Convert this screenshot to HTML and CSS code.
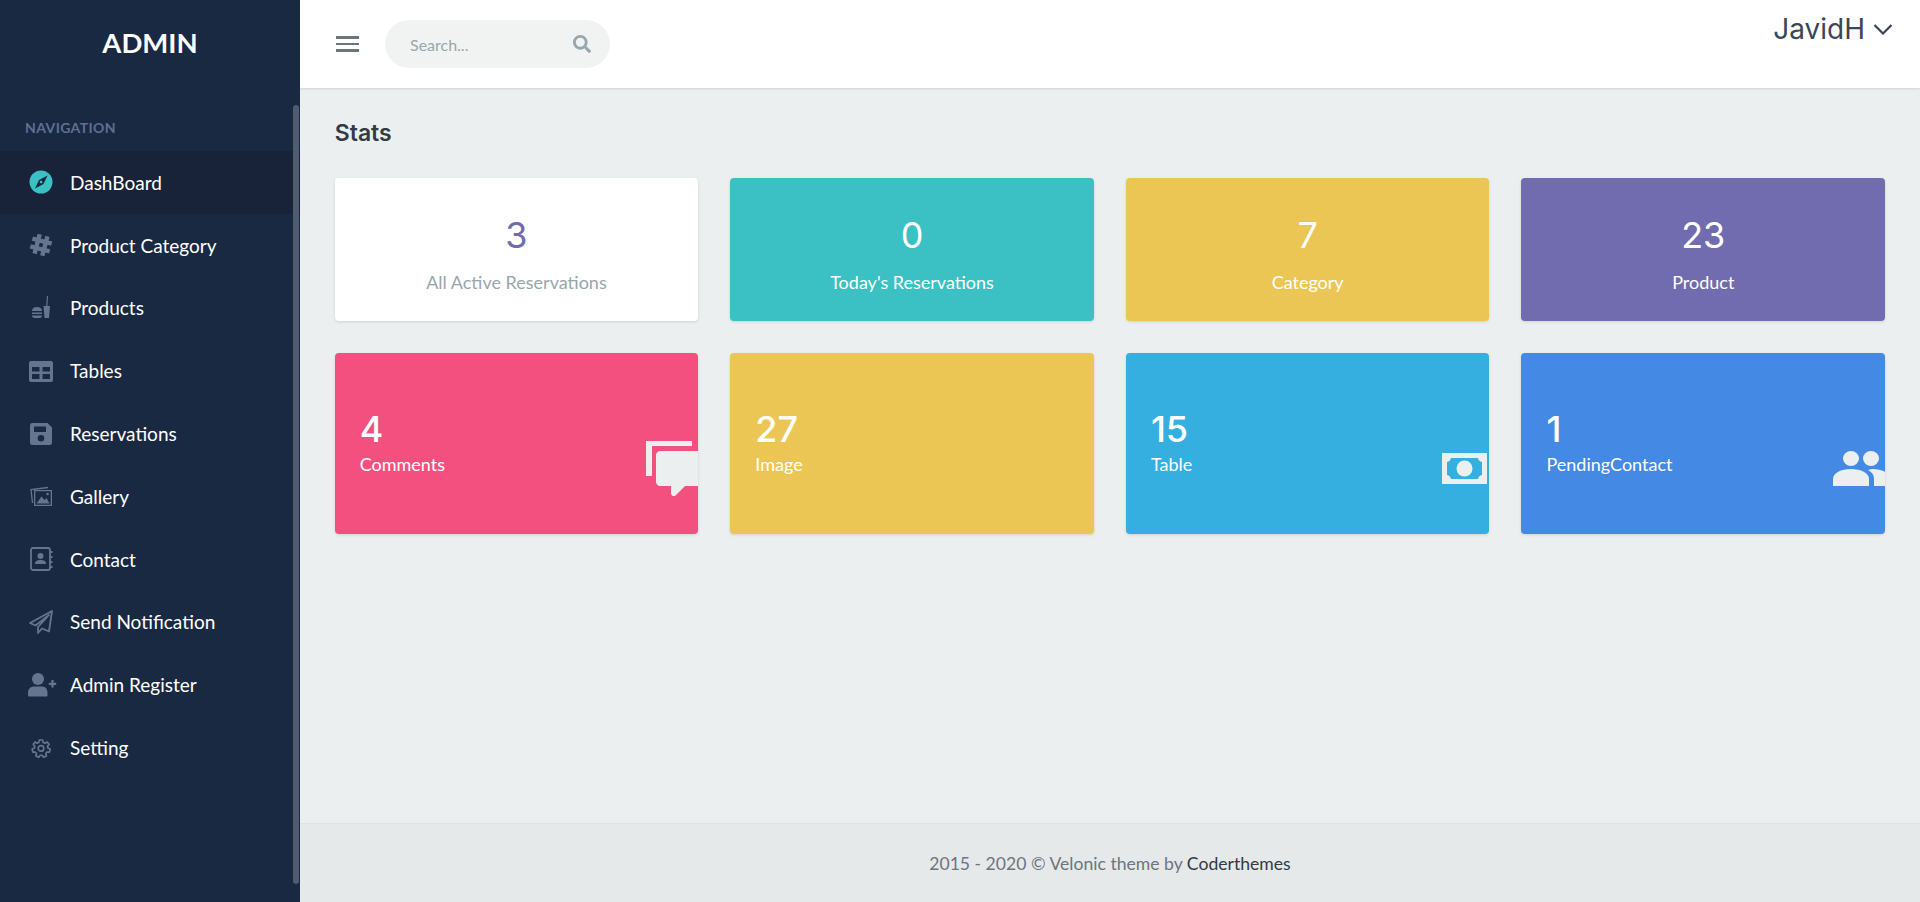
FILE: index.html
```html
<!DOCTYPE html>
<html lang="en">
<head>
    <meta charset="UTF-8">
    <meta name="viewport" content="width=device-width, initial-scale=1.0">
    <title>Admin Dashboard</title>
    <link rel="stylesheet" href="styles.css">
</head>
<body>
    <aside class="sidebar">
        <div class="logo">ADMIN</div>
        <div class="nav-title">Navigation</div>
        <nav class="nav">
            <a class="nav-item active" href="#">
                <svg class="nav-icon" viewBox="0 0 24 24"><circle cx="12" cy="12" r="11.5" fill="#3bc0c3"/><path d="M18.500 5.500l-4 8.500-8.500 4.500 4-8.500z" fill="#1a2942"/><circle cx="12" cy="12" r="1.300" fill="#3bc0c3"/></svg>
                <span>DashBoard</span>
            </a>
            <a class="nav-item" href="#">
                <svg class="nav-icon" viewBox="0 0 24 24"><g transform="rotate(15 12 12)" stroke="#66758f" stroke-width="4.400" fill="none"><path d="M8 2v20M16 2v20M2 8h20M2 16h20"/></g></svg>
                <span>Product Category</span>
            </a>
            <a class="nav-item" href="#">
                <svg class="nav-icon" viewBox="0 0 24 24"><path d="M3 15c0-2.500 2-4 5-4s5 1.500 5 4zM3 16.500h10v1.500H3zM3 19.500h10c0 1.500-1 2.500-2.500 2.500h-5C4 22 3 21 3 19.500z" fill="#66758f"/><path d="M14.500 10h6.500l-1 12h-4.500z" fill="#66758f"/><path d="M17.800 10l.7-10" stroke="#66758f" stroke-width="1.200"/></svg>
                <span>Products</span>
            </a>
            <a class="nav-item" href="#">
                <svg class="nav-icon" viewBox="0 0 24 24"><path fill-rule="evenodd" d="M2 2h20a2 2 0 0 1 2 2v17a2 2 0 0 1-2 2H2a2 2 0 0 1-2-2V4a2 2 0 0 1 2-2zm1 6v4.500h7.500V8zm10.500 0v4.500H21V8zM3 15v5h7.500v-5zm10.500 0v5H21v-5z" fill="#66758f"/></svg>
                <span>Tables</span>
            </a>
            <a class="nav-item" href="#">
                <svg class="nav-icon" viewBox="0 0 24 24"><path fill-rule="evenodd" d="M3 1h15.500L23 5.500V20.500a2.500 2.500 0 0 1-2.500 2.500h-17A2.500 2.500 0 0 1 1 20.500V3.500A2.500 2.500 0 0 1 3 1zm2 3.500v5.500h12V4.500zM12 13a3.300 3.300 0 1 0 0 6.600 3.300 3.300 0 0 0 0-6.600z" fill="#66758f"/></svg>
                <span>Reservations</span>
            </a>
            <a class="nav-item" href="#">
                <svg class="nav-icon" viewBox="0 0 24 24"><path d="M3.500 19L2 5.500 19 3.500" fill="none" stroke="#66758f" stroke-width="1.300"/><path fill-rule="evenodd" d="M5 6h18v16H5zm1.300 1.300v13.400h15.400V7.300z" fill="#66758f"/><path d="M7.500 19.500l5-7 3 3.500 2-2 3 5.500z" fill="#66758f"/><circle cx="18.500" cy="10" r="1.300" fill="#66758f"/></svg>
                <span>Gallery</span>
            </a>
            <a class="nav-item" href="#">
                <svg class="nav-icon" viewBox="0 0 24 24"><rect x="2" y="1" width="19" height="22" rx="2" fill="none" stroke="#66758f" stroke-width="1.800"/><circle cx="11.500" cy="9" r="3" fill="#66758f"/><path d="M6 17c0-3 2-4 5.500-4s5.500 1 5.500 4z" fill="#66758f"/><path d="M21 5h2.500M21 10h2.500M21 15h2.500M21 20h2.500" stroke="#66758f" stroke-width="2"/></svg>
                <span>Contact</span>
            </a>
            <a class="nav-item" href="#">
                <svg class="nav-icon" viewBox="0 0 24 24"><path d="M23 1L1 13l5.500 2.500L20 5 9 17v6l4-4.500 7 3z" fill="none" stroke="#66758f" stroke-width="1.800" stroke-linejoin="round"/></svg>
                <span>Send Notification</span>
            </a>
            <a class="nav-item" href="#">
                <svg class="nav-icon" viewBox="0 0 24 24"><circle cx="9" cy="6" r="6" fill="#66758f"/><path d="M-1 22.500V20c0-4.500 3-6.500 6-6.500h8c3 0 5.500 2 5.500 6.500v2.500a1 1 0 0 1-1 1H0a1 1 0 0 1-1-1z" fill="#66758f"/><path d="M23.500 7v7.500M19.800 10.800h7.400" stroke="#66758f" stroke-width="2.200"/></svg>
                <span>Admin Register</span>
            </a>
            <a class="nav-item" href="#">
                <svg class="nav-icon" viewBox="0 0 24 24"><g transform="translate(2.400 2.400) scale(.8)"><path d="M10 2h4l.7 3 2.300 1 2.700-1.600 2.500 3-2 2.300.4 2.300 2.900 1.200-.9 3.900-3.100-.1-1.500 1.900.8 3-3.600 1.700-1.800-2.500h-2.400l-1.800 2.500-3.600-1.700.8-3-1.500-1.900-3.100.1-.9-3.900 2.900-1.200.4-2.300-2-2.300 2.500-3L7 6l2.300-1z" fill="none" stroke="#66758f" stroke-width="2.100" stroke-linejoin="round"/><circle cx="12" cy="12.500" r="3.500" fill="none" stroke="#66758f" stroke-width="2.100"/></g></svg>
                <span>Setting</span>
            </a>
        </nav>
        <div class="scroll-thumb"></div>
    </aside>

    <div class="main">
        <header class="topbar">
            <button class="menu-btn" type="button" aria-label="Menu"><span></span><span></span><span></span></button>
            <div class="search">
                <span>Search...</span>
                <svg viewBox="0 0 512 512" width="18" height="18"><path d="M505 442.700L405.300 343c-4.500-4.500-10.600-7-17-7H372c27.600-35.300 44-79.700 44-128C416 93.100 322.900 0 208 0S0 93.100 0 208s93.100 208 208 208c48.300 0 92.700-16.400 128-44v16.300c0 6.400 2.500 12.500 7 17l99.700 99.700c9.400 9.400 24.600 9.400 33.900 0l28.300-28.300c9.400-9.400 9.400-24.600.1-34zM208 336c-70.700 0-128-57.200-128-128 0-70.700 57.200-128 128-128 70.700 0 128 57.200 128 128 0 70.700-57.200 128-128 128z" fill="#98a6ad"/></svg>
            </div>
            <div class="user">
                <span>JavidH</span>
                <svg viewBox="0 0 20 11" width="20" height="11"><path d="M1.500 1l8.500 8.500L18.500 1" fill="none" stroke="#3b4656" stroke-width="2.200"/></svg>
            </div>
        </header>

        <main class="content">
            <h4 class="page-title">Stats</h4>
            <div class="stats">
                <div class="stat stat-white"><h3>3</h3><p>All Active Reservations</p></div>
                <div class="stat stat-teal"><h3>0</h3><p>Today's Reservations</p></div>
                <div class="stat stat-yellow"><h3>7</h3><p>Category</p></div>
                <div class="stat stat-purple"><h3>23</h3><p>Product</p></div>
            </div>
            <div class="tiles">
                <div class="tile tile-pink">
                    <h3>4</h3><p>Comments</p>
                    <svg class="tile-icon comments" viewBox="0 0 62 55"><path d="M0 35V0h46v5H6v30z" fill="#ebeff0"/><path d="M14 10h48v35H39l-9 9c-2 2-5 1-5-2v-7H14c-2 0-4-2-4-4V14c0-2 2-4 4-4z" fill="#ebeff0"/></svg>
                </div>
                <div class="tile tile-yellow"><h3>27</h3><p>Image</p></div>
                <div class="tile tile-sky">
                    <h3>15</h3><p>Table</p>
                    <svg class="tile-icon money" viewBox="0 0 45 31"><path fill-rule="evenodd" d="M0 0h45v31H0zM9 5a5 5 0 0 1-4 4v13a5 5 0 0 1 4 4h27a5 5 0 0 1 4-4V9a5 5 0 0 1-4-4z" fill="#ebeff0"/><ellipse cx="22.500" cy="15.500" rx="8" ry="8" fill="#ebeff0"/></svg>
                </div>
                <div class="tile tile-blue">
                    <h3>1</h3><p>PendingContact</p>
                    <svg class="tile-icon users" viewBox="0 0 62 35"><ellipse cx="18" cy="7.500" rx="8" ry="7.500" fill="#ebeff0"/><ellipse cx="38" cy="7.500" rx="8" ry="7.500" fill="#ebeff0"/><path d="M0 35v-7c0-6 8-10 18-10s18 4 18 10v7z" fill="#ebeff0"/><path d="M39 18c10 0 19 4 19 10v7H41v-7c0-4-2-7-6-9z" fill="#ebeff0"/></svg>
                </div>
            </div>
        </main>

        <footer class="footer">2015 - 2020 &copy; Velonic theme by <a href="#">Coderthemes</a></footer>
    </div>
</body>
</html>
```

FILE: styles.css
```css
* {
    box-sizing: border-box;
}

body {
    margin: 0;
    height: 100vh;
    display: flex;
    overflow: hidden;
    font-family: 'Lato', sans-serif;
    background-color: #ebeff0;
}

/* sidebar */
.sidebar {
    position: relative;
    width: 300px;
    flex-shrink: 0;
    background-color: #1a2942;
}

.logo {
    height: 88px;
    line-height: 86px;
    text-align: center;
    color: #fff;
    font-size: 27.5px;
    font-weight: 700;
}

.nav-title {
    padding: 31px 25px 0;
    height: 63px;
    color: #5f7090;
    font-size: 14px;
    font-weight: 700;
    letter-spacing: 0.4px;
    text-transform: uppercase;
}

.nav-item {
    display: flex;
    align-items: center;
    height: 62.8px;
    padding-left: 29px;
    color: #fff;
    font-size: 19px;
    text-decoration: none;
}

.nav-item.active {
    background-color: #18233a;
}

.nav-icon {
    width: 24px;
    height: 24px;
    margin-right: 17px;
    overflow: visible;
}

.scroll-thumb {
    position: absolute;
    top: 105px;
    right: 1px;
    width: 6px;
    height: 779px;
    border-radius: 4px;
    background-color: #4f5b6e;
}

/* top bar */
.main {
    flex: 1;
    display: flex;
    flex-direction: column;
    min-width: 0;
}

.topbar {
    display: flex;
    align-items: center;
    height: 88px;
    flex-shrink: 0;
    padding: 0 27px 0 36px;
    background-color: #fff;
    box-shadow: 0 1px 2px rgba(0, 0, 0, 0.12);
}

.menu-btn {
    display: flex;
    flex-direction: column;
    gap: 4px;
    width: 23px;
    padding: 0;
    margin-right: 26px;
    border: none;
    background: none;
}

.menu-btn span {
    height: 2.5px;
    background-color: #6c757d;
}

.search {
    display: flex;
    align-items: center;
    justify-content: space-between;
    width: 225px;
    height: 48px;
    padding: 0 19px 0 25px;
    border-radius: 24px;
    background-color: #f1f3f3;
    color: #98a6ad;
    font-size: 16px;
}

.user {
    display: flex;
    align-items: center;
    gap: 8px;
    margin-left: auto;
    align-self: flex-start;
    margin-top: 12px;
    color: #3b4656;
    font-family: 'Inter', sans-serif;
    font-size: 28px;
}

/* content */
.content {
    flex: 1;
    padding: 0 35px 0 34.7px;
}

.page-title {
    margin: 0;
    height: 90px;
    padding-top: 31px;
    color: #323a46;
    font-family: 'Inter', sans-serif;
    font-size: 23px;
    font-weight: 600;
}

.stats,
.tiles {
    display: grid;
    grid-template-columns: repeat(4, 1fr);
    gap: 32.1px;
}

.stat,
.tile {
    border-radius: 4px;
    color: #fff;
    box-shadow: 0 1px 3px rgba(0, 0, 0, 0.12);
}

.stat {
    height: 143px;
    padding-top: 35px;
    text-align: center;
}

.stat h3,
.tile h3 {
    margin: 0;
    font-family: 'Inter', sans-serif;
    font-size: 36px;
    font-weight: 400;
    line-height: 44px;
}

.stat p,
.tile p {
    margin: 0;
    font-size: 18px;
}

.stat p {
    margin-top: 14px;
}

.stat-white {
    background-color: #fff;
    color: #98a6ad;
}

.stat-white h3 {
    color: #716cb0;
}

.stat-teal {
    background-color: #3bc0c3;
}

.stat-yellow,
.tile-yellow {
    background-color: #ecc655;
}

.stat-purple {
    background-color: #716cb0;
}

.tiles {
    margin-top: 32px;
}

.tile {
    position: relative;
    height: 181px;
    padding: 54px 25px 0;
    overflow: hidden;
}

.tile p {
    margin-top: 2px;
}

.tile h3 {
    font-weight: 500;
}

.tile-pink {
    background-color: #f4507f;
}

.tile-sky {
    background-color: #34afe0;
}

.tile-blue {
    background-color: #4489e4;
}

.tile-icon {
    position: absolute;
}

.comments {
    top: 88px;
    right: -10px;
    width: 62px;
    height: 55px;
}

.money {
    top: 100px;
    right: 2px;
    width: 45px;
    height: 31px;
}

.users {
    top: 98px;
    right: -10px;
    width: 62px;
    height: 35px;
}

/* footer */
.footer {
    height: 79px;
    flex-shrink: 0;
    padding-top: 29px;
    border-top: 1px solid #dee2e4;
    background-color: #e6e9ea;
    color: #6c757d;
    font-size: 17.6px;
    text-align: center;
}

.footer a {
    color: #323a46;
    text-decoration: none;
}
```
